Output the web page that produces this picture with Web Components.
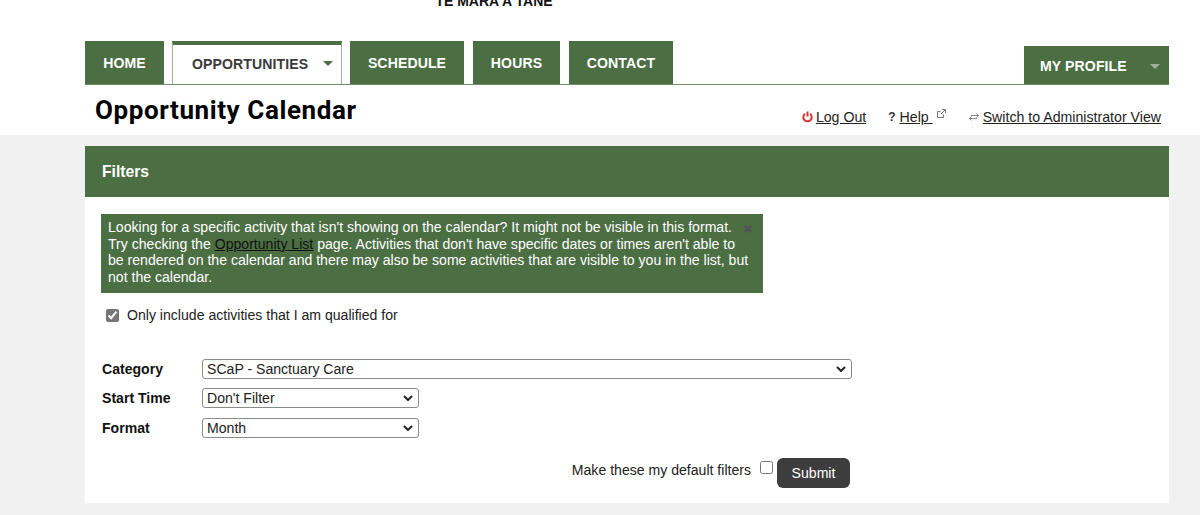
<!DOCTYPE html>
<html lang="en">
<head>
<meta charset="utf-8">
<title>Opportunity Calendar</title>
<style>
  html, body { margin: 0; padding: 0; height: 515px; overflow: hidden; background: #f1f1f1; }
  body { font-family: "Liberation Sans", Arial, sans-serif; font-size: 14.08px; color: #222; }
</style>
</head>
<body>
<site-header>
  <nav-tab slot="tabs" style="width:79px">HOME</nav-tab>
  <nav-tab slot="tabs" style="width:170px;margin-left:8px" active caret>OPPORTUNITIES</nav-tab>
  <nav-tab slot="tabs" style="width:114px;margin-left:8px">SCHEDULE</nav-tab>
  <nav-tab slot="tabs" style="width:87px;margin-left:9px">HOURS</nav-tab>
  <nav-tab slot="tabs" style="width:104px;margin-left:9px">CONTACT</nav-tab>
</site-header>
<filter-panel heading="Filters">
  <info-alert>Looking for a specific activity that isn't showing on the calendar? It might not be visible in this format. Try checking the <a href="#">Opportunity List</a> page. Activities that don't have specific dates or times aren't able to be rendered on the calendar and there may also be some activities that are visible to you in the list, but not the calendar.</info-alert>
</filter-panel>

<script>
  class SiteHeader extends HTMLElement {
    constructor() {
      super();
      this.attachShadow({ mode: 'open' });
      this.shadowRoot.innerHTML = `
        <style>
          :host { display: block; background: #fff; height: 135px; }
          .logo {
            height: 8px; overflow: hidden; display: flex; justify-content: center; align-items: flex-end;
            padding-right: 212px; font-weight: 700; font-size: 14px; line-height: 14px; color: #111; white-space: nowrap;
          }
          .bar {
            display: flex; align-items: flex-end; height: 43px; margin: 33px 31px 0 85px;
            border-bottom: 1px solid #6f9068;
          }
          .tabs { display: flex; align-items: stretch; height: 43px; }
          .profile {
            margin-left: auto; width: 145px; height: 38px; background: #4b6e43; box-sizing: border-box;
            display: flex; align-items: center; padding: 2px 0 0 16px; position: relative;
            color: #fff; font-weight: 700; font-size: 14.08px; letter-spacing: .1px;
          }
          .profile i {
            position: absolute; right: 9px; top: 18px; border: 5px solid transparent; border-top-color: #9fb39a; border-bottom: 0;
          }
          .sub { display: flex; align-items: center; height: 50px; margin: 0 39px 0 95px; }
          h1 { margin: 0; font: 700 26px/30px Roboto, "Liberation Sans", sans-serif; letter-spacing: .6px; color: #000; }
          .links { margin-left: auto; display: flex; align-items: center; padding-top: 14px; font-size: 14.16px; color: #222; }
          .links a { color: #222; text-decoration: underline; }
          .links span { display: inline-flex; align-items: center; }
          .q { font-weight: 700; font-size: 12px; margin-right: 4px; color: #333; }
          svg { display: block; }
        </style>
        <div class="logo">TE MARA A TANE</div>
        <div class="bar">
          <div class="tabs"><slot name="tabs"></slot></div>
          <div class="profile">MY PROFILE<i></i></div>
        </div>
        <div class="sub">
          <h1>Opportunity Calendar</h1>
          <div class="links">
            <span>
              <svg width="11" height="12" viewBox="0 0 11 12" style="margin-right:3px" fill="none" stroke="#d9363a" stroke-width="2"><path d="M3 2.8a4.2 4.2 0 1 0 5 0"/><path d="M5.5 .5v5"/></svg>
              <a href="#">Log Out</a>
            </span>
            <span style="margin-left:22px">
              <span class="q">?</span><a href="#">Help&nbsp;</a>
              <svg width="9" height="9" viewBox="0 0 9 9" style="margin:-8px 0 0 4px" fill="none" stroke="#777" stroke-width="1"><path d="M6.500 5.500v3h-6V2.500h3"/><path d="M5 .5h3.500v3.500M8.500 .5L4 5"/></svg>
            </span>
            <span style="margin-left:23px">
              <svg width="10" height="8" viewBox="0 0 10 8" style="margin-right:4px" fill="none" stroke="#888" stroke-width="1"><path d="M2 2.500h7.500M7.500 .5l2 2-2 2"/><path d="M8 5.500H.5M2.500 3.500l-2 2 2 2"/></svg>
              <a href="#">Switch to Administrator View</a>
            </span>
          </div>
        </div>`;
    }
  }

  class NavTab extends HTMLElement {
    constructor() {
      super();
      this.attachShadow({ mode: 'open' });
      this.shadowRoot.innerHTML = `
        <style>
          :host {
            display: flex; align-items: center; justify-content: center; box-sizing: border-box;
            background: #4b6e43; color: #fff; font-weight: 700; font-size: 14.08px; letter-spacing: .1px; padding-top: 1px;
          }
          :host([active]) {
            background: #fff; color: #3a3a3a; border: 1px solid #9db498; border-top: 4px solid #4b6e43; border-bottom: 0;
            justify-content: flex-start; padding: 0 0 1px 19px;
          }
          i { position: absolute; border: 5px solid transparent; border-top-color: #4b6e43; border-bottom: 0; margin-left: 131px; margin-top: -1px; }
          :host(:not([caret])) i { display: none; }
        </style>
        <i></i><slot></slot>`;
    }
  }

  class InfoAlert extends HTMLElement {
    constructor() {
      super();
      this.attachShadow({ mode: 'open' });
      this.shadowRoot.innerHTML = `
        <style>
          :host {
            display: block; box-sizing: border-box; width: 662px; height: 79px; position: relative;
            background: #4b6e43; color: #fff; font-size: 14.08px; line-height: 16.7px; padding: 5px 12px 5px 7px;
          }
          ::slotted(a) { color: #111; text-decoration: underline; }
          .x { position: absolute; right: 10px; top: 5px; font: 700 12px/20px "DejaVu Sans", sans-serif; color: #4f5355; }
        </style>
        <slot></slot><span class="x">✖</span>`;
    }
  }

  class FilterPanel extends HTMLElement {
    constructor() {
      super();
      this.attachShadow({ mode: 'open' });
      this.shadowRoot.innerHTML = `
        <style>
          :host { display: block; margin: 11px 31px 0 85px; background: #fff; height: 357px; font-size: 14.08px; color: #222; }
          header { height: 51px; background: #4b6e43; color: #fff; font-weight: 700; font-size: 15.7px; display: flex; align-items: center; padding-left: 17px; }
          .body { padding: 17px 16px 0; }
          .qual { display: flex; align-items: center; height: 16px; margin: 14px 0 0 5px; }
          input[type=checkbox] { width: 13px; height: 13px; margin: 0; }
          .qual input { accent-color: #767676; margin-right: 8px; }
          .grid { display: grid; grid-template-columns: 100px auto; grid-auto-rows: 19.5px; row-gap: 10px; justify-items: start; align-items: center; margin: 36px 0 0 1px; }
          label { font-weight: 700; color: #111; }
          select {
            appearance: none; font: 14.08px "Liberation Sans", sans-serif; height: 20px; box-sizing: border-box; padding: 0 0 0 4px;
            color: #222; border: 1px solid #8a8a8a; border-radius: 3px;
            background: #fff url("data:image/svg+xml,%3Csvg xmlns='http://www.w3.org/2000/svg' width='10' height='6'%3E%3Cpath d='M1 1l4 4 4-4' fill='none' stroke='%23222' stroke-width='2'/%3E%3C/svg%3E") no-repeat right 5px center;
          }
          .wide { width: 650px; }
          .short { width: 217px; }
          .foot { display: flex; justify-content: flex-end; align-items: flex-start; margin: 20.5px 303px 0 0; }
          .foot span { margin-top: 4px; }
          .foot input { margin: 3px 4px 0 9px; }
          button {
            width: 73px; height: 30px; border: 0; border-radius: 6px; background: #3d3d3d; color: #fff;
            font: 14.08px "Liberation Sans", sans-serif;
          }
        </style>
        <header>${this.getAttribute('heading')}</header>
        <div class="body">
          <slot></slot>
          <div class="qual"><input type="checkbox" checked><span>Only include activities that I am qualified for</span></div>
          <div class="grid">
            <label>Category</label>
            <select class="wide"><option>SCaP - Sanctuary Care</option></select>
            <label>Start Time</label>
            <select class="short"><option>Don't Filter</option></select>
            <label>Format</label>
            <select class="short"><option>Month</option></select>
          </div>
          <div class="foot"><span>Make these my default filters</span><input type="checkbox"><button>Submit</button></div>
        </div>`;
    }
  }

  customElements.define('site-header', SiteHeader);
  customElements.define('nav-tab', NavTab);
  customElements.define('info-alert', InfoAlert);
  customElements.define('filter-panel', FilterPanel);
</script>
</body>
</html>
